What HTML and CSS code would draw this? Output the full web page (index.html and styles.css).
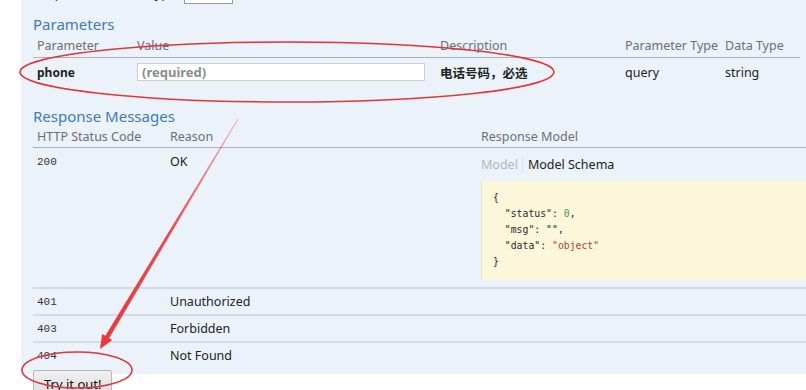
FILE: index.html
```html
<!DOCTYPE html>
<html lang="en">
<head>
  <meta charset="UTF-8">
  <title>Operation – getUserByPhone</title>
  <link rel="stylesheet" href="styles.css">
</head>
<body>
  <div class="panel">
    <div class="content-type">Response Content Type <span class="select">json</span></div>

    <h4>Parameters</h4>
    <table class="param-table">
      <colgroup>
        <col class="c-param"><col class="c-value"><col class="c-desc"><col class="c-ptype"><col class="c-dtype">
      </colgroup>
      <thead>
        <tr>
          <th>Parameter</th>
          <th>Value</th>
          <th>Description</th>
          <th>Parameter Type</th>
          <th>Data Type</th>
        </tr>
      </thead>
      <tbody>
        <tr>
          <td class="param-name">phone</td>
          <td><input class="required" type="text" placeholder="(required)"></td>
          <td class="param-desc">电话号码，必选</td>
          <td>query</td>
          <td>string</td>
        </tr>
      </tbody>
    </table>

    <h4 class="responses-title">Response Messages</h4>
    <table class="response-table">
      <colgroup>
        <col class="c-code"><col class="c-reason"><col class="c-model">
      </colgroup>
      <thead>
        <tr>
          <th>HTTP Status Code</th>
          <th>Reason</th>
          <th>Response Model</th>
        </tr>
      </thead>
      <tbody>
        <tr class="row-ok">
          <td class="code">200</td>
          <td>OK</td>
          <td>
            <div class="model-tabs"><span class="tab-off">Model</span><span class="tab-on">Model Schema</span></div>
            <pre class="signature">{
  "status": <span class="num">0</span>,
  "msg": "",
  "data": <span class="str">"object"</span>
}</pre>
          </td>
        </tr>
        <tr>
          <td class="code">401</td>
          <td>Unauthorized</td>
          <td></td>
        </tr>
        <tr>
          <td class="code">403</td>
          <td>Forbidden</td>
          <td></td>
        </tr>
        <tr>
          <td class="code">404</td>
          <td>Not Found</td>
          <td></td>
        </tr>
      </tbody>
    </table>

    <button class="try-btn">Try it out!</button>
  </div>

  <!-- red markup drawn over the screenshot -->
  <svg class="annotations" width="806" height="390" viewBox="0 0 806 390">
    <defs>
      <linearGradient id="fade" x1="238" y1="119" x2="100" y2="349" gradientUnits="userSpaceOnUse">
        <stop offset="0" stop-color="#e8383d" stop-opacity="0.35"/>
        <stop offset="0.5" stop-color="#e8383d" stop-opacity="0.9"/>
        <stop offset="1" stop-color="#e8383d"/>
      </linearGradient>
    </defs>
    <ellipse cx="287" cy="72" rx="267" ry="30" fill="none" stroke="#e2343c" stroke-width="1.6"/>
    <ellipse cx="77" cy="370" rx="55" ry="18" fill="none" stroke="#e2343c" stroke-width="1.6"/>
    <polygon fill="url(#fade)" points="238.4,119.3 109.1,338.2 112.3,340.1 100,349 102.1,333.9 105.3,335.8 237.6,118.7"/>
  </svg>
</body>
</html>
```

FILE: styles.css
```css
body {
  margin: 0;
  background: #fff;
  font-family: "Noto Sans", "Open Sans", "Noto Sans CJK SC", sans-serif;
  font-size: 12.5px;
  color: #222;
  height: 390px;
  overflow: hidden;
  position: relative;
}

.panel {
  margin-left: 21px;
  padding-left: 12px;
  height: 390px;
  background: #ecf2f9;
}

.content-type {
  margin-top: -16px;
  height: 21px;
  line-height: 18px;
  font-size: 13px;
  color: #333;
}

.select {
  display: inline-block;
  vertical-align: top;
  width: 44px;
  height: 18px;
  margin-left: 4px;
  border: 1px solid #999;
  background: #fff;
  overflow: hidden;
  font-size: 11px;
  line-height: 15px;
  padding-left: 3px;
}

h4 {
  margin: 9px 0 0;
  font-size: 15px;
  line-height: 20px;
  font-weight: normal;
  color: #3c7bbd;
}

.responses-title {
  margin-top: 20px;
}

table {
  border-collapse: collapse;
  table-layout: fixed;
}

th {
  text-align: left;
  font-weight: normal;
  color: #6a6f75;
  padding: 0 4px;
  border-bottom: 1px solid #aab3bd;
  white-space: nowrap;
}

td {
  padding: 0 4px;
  white-space: nowrap;
}

/* parameters */
.param-table { width: 767px; }
.param-table th { height: 23px; }
.param-table td { height: 28px; }
.c-param { width: 100px; }
.c-value { width: 303px; }
.c-desc { width: 185px; }
.c-ptype { width: 100px; }
.c-dtype { width: 79px; }

.param-name { font-weight: bold; font-size: 12px; }
.param-desc { font-weight: bold; }

input.required {
  display: block;
  width: 288px;
  height: 18px;
  box-sizing: border-box;
  margin: 0;
  border: 1px solid #cfcfcf;
  background: #fff;
  padding: 0 4px;
  font: bold 13px "Noto Sans", sans-serif;
}

input.required::placeholder {
  color: #8c8c8c;
  opacity: 1;
}

/* responses */
.response-table { width: 780px; }
.response-table th { height: 21px; }
.c-code { width: 133px; }
.c-reason { width: 311px; }
.c-model { width: 336px; }

.response-table tbody tr + tr td {
  border-top: 2px solid #d5dce5;
}

.response-table tbody td {
  height: 25px;
  line-height: 16px;
}

.row-ok td {
  vertical-align: top;
  padding-top: 6px;
}

.code {
  font-family: "Liberation Mono", "DejaVu Sans Mono", monospace;
  font-size: 11px;
  color: #333;
}

.model-tabs {
  margin-top: 3px;
}

.tab-off {
  color: #b3b8bd;
  padding-right: 4px;
  margin-right: 5px;
  border-right: 1px solid #dde3ea;
}

.tab-on {
  color: #222;
}

.signature {
  margin: 8px 0 7px;
  height: 80px;
  padding: 9px 11px 10px;
  background: #fcf6db;
  border-left: 1px solid #ebe4c4;
  font: 9.8px/16px "DejaVu Sans Mono", monospace;
  color: #2a2a2a;
}

.num { color: #3f9a3f; }
.str { color: #c0392b; }

.try-btn {
  display: block;
  margin-top: 2px;
  padding: 4px 10px;
  font: 13px "Noto Sans", sans-serif;
  color: #111;
  background: linear-gradient(#f0f0f0, #dcdcdc);
  border: 1px solid #b9b9b9;
  border-radius: 2px;
}

.annotations {
  position: absolute;
  top: 0;
  left: 0;
  pointer-events: none;
}
```
